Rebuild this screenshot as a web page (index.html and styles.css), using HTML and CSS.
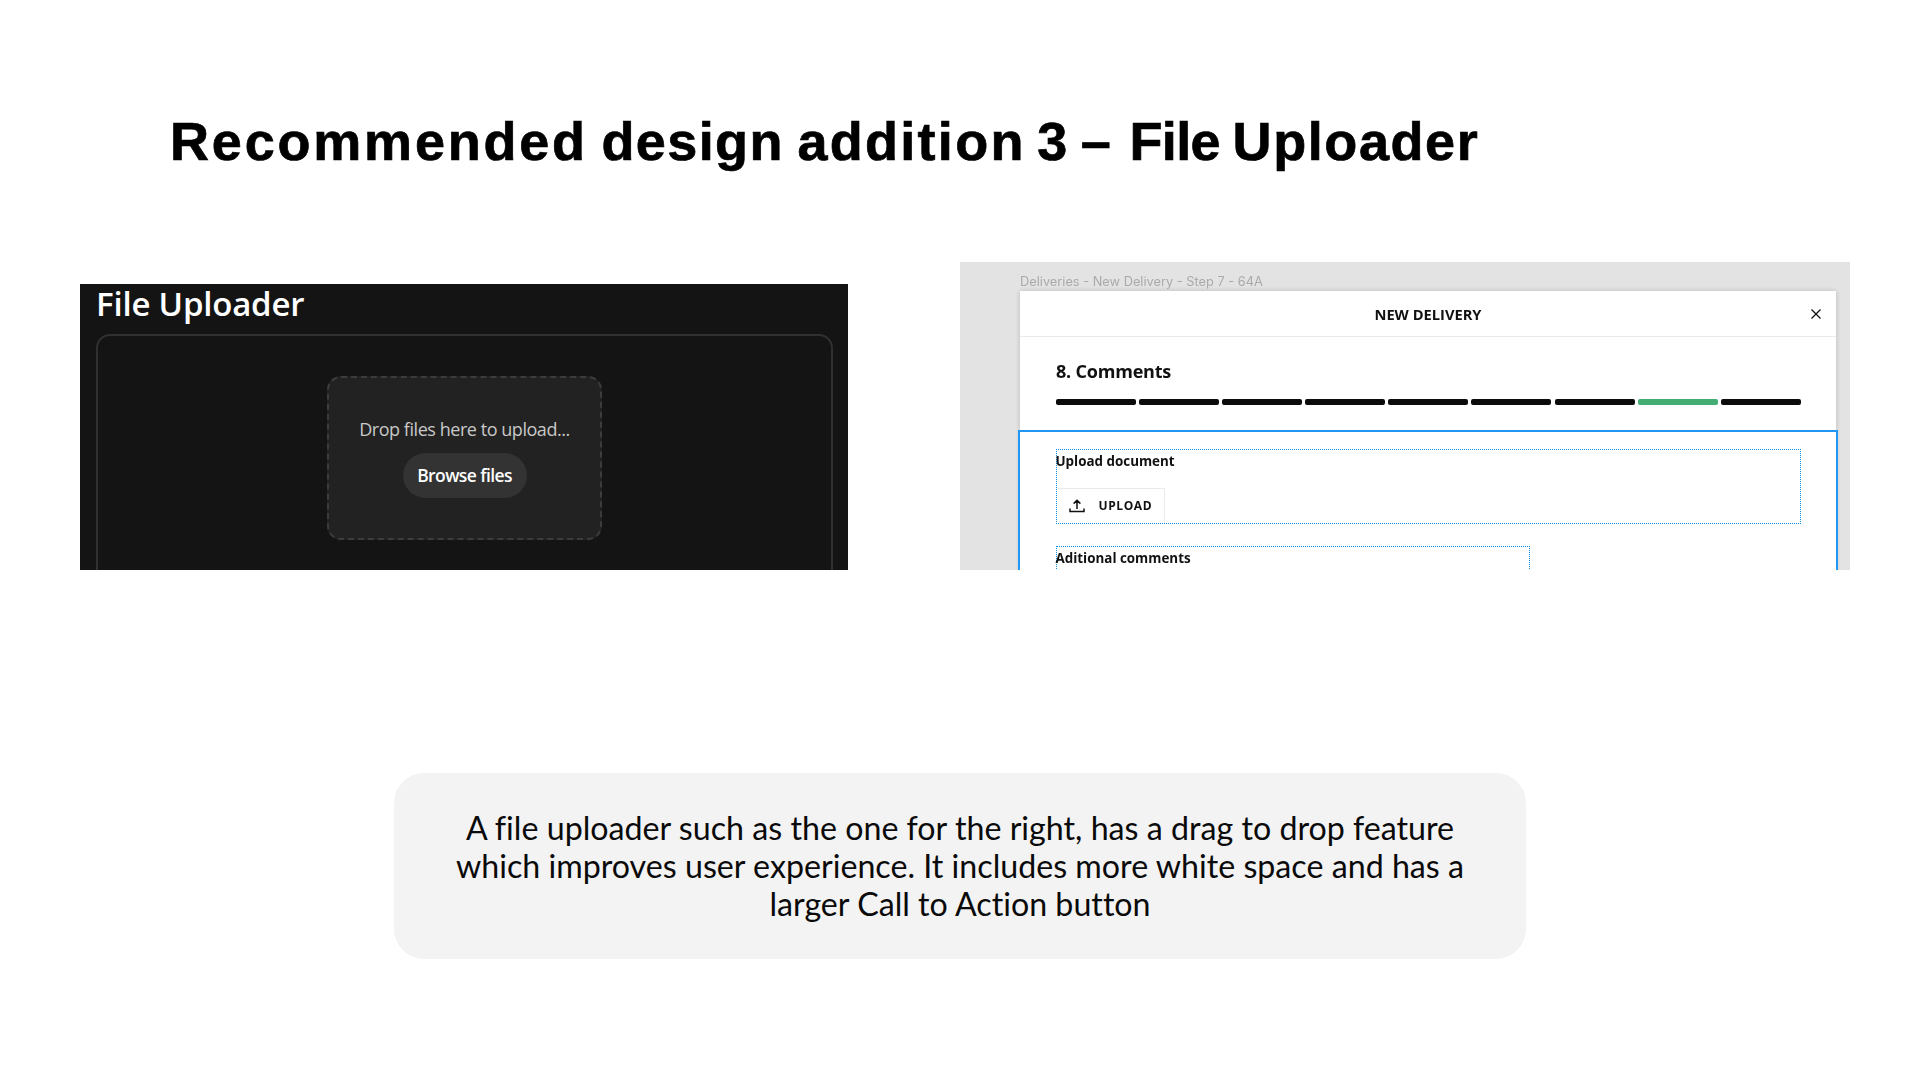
FILE: index.html
```html
<!DOCTYPE html>
<html lang="en">
<head>
<meta charset="utf-8">
<title>File Uploader</title>
<link rel="stylesheet" href="styles.css">
</head>
<body>
<main class="slide">
  <h1 class="title"><span class="t-recommended">Recommended</span> <span class="t-design">design</span> <span class="t-addition">addition</span> <span class="t-three">3</span> <span class="t-dash">–</span> <span class="t-file">File</span> <span class="t-uploader">Uploader</span></h1>
  <section class="shots">
    <div class="dark">
      <h2 class="dark-title">File Uploader</h2>
      <div class="dark-clip">
        <div class="dark-card">
          <div class="drop">
            <p class="drop-text">Drop files here to upload...</p>
            <span class="browse">Browse files</span>
          </div>
        </div>
      </div>
    </div>
    <div class="light">
      <p class="crumb">Deliveries - New Delivery - Step 7 - 64A</p>
      <div class="modal">
        <header class="modal-head">
          <span></span>
          <span class="modal-title">NEW DELIVERY</span>
          <svg class="close" viewBox="0 0 12 12" width="12" height="12"><path d="M1.5 1.5l9 9M10.5 1.5l-9 9" fill="none" stroke="#111" stroke-width="1.3"/></svg>
        </header>
        <div class="step">
          <h3 class="step-title">8. Comments</h3>
          <div class="bars">
            <i class="bar"></i><i class="bar"></i><i class="bar"></i><i class="bar"></i><i class="bar"></i><i class="bar"></i><i class="bar"></i><i class="bar green"></i><i class="bar"></i>
          </div>
        </div>
        <div class="frame">
          <div class="field">
            <div class="label">Upload document</div>
            <div class="upload">
              <svg viewBox="0 0 16 14" width="16" height="14"><path d="M8 10V1.5M4.6 4.6L8 1.2l3.4 3.4M1 9.5v3h14v-3" fill="none" stroke="#111" stroke-width="1.5"/></svg>
              <span class="upload-text">UPLOAD</span>
            </div>
          </div>
          <div class="field field-short">
            <div class="label">Aditional comments</div>
          </div>
        </div>
      </div>
    </div>
  </section>
  <section class="note">
    <p class="note-text">A file uploader such as the one for the right, has a drag to drop feature which improves user experience. It includes more white space and has a larger Call to Action button</p>
  </section>
</main>
</body>
</html>
```

FILE: styles.css
```css
* { box-sizing: border-box; }
html, body { margin: 0; padding: 0; background: #fff; }
.slide { width: 1920px; height: 1080px; overflow: hidden; display: flex; flex-direction: column; }
.title {
  margin: 110px 0 0 170px; height: 63px;
  font: bold 54px/62px "Liberation Sans", Arial, sans-serif; word-spacing: -1.5px; -webkit-text-stroke: .7px #000; color: #000; white-space: nowrap;
}
.t-recommended { letter-spacing: 2.8px; }
.t-design { letter-spacing: 1.4px; }
.t-addition { letter-spacing: 2.3px; }
.t-three { margin-left: -2px; }
.t-file { margin-left: 5px; letter-spacing: -.6px; }
.t-uploader { letter-spacing: 1.6px; margin-left: -1px; }
.shots { display: flex; align-items: flex-end; gap: 112px; margin: 89px 0 0 80px; height: 308px; }
.dark {
  width: 768px; height: 286px; background: #141414; padding: 0 0 0 16px;
  font-family: "Open Sans", sans-serif;
}
.dark-title { margin: 0; height: 50px; font: 600 33px/40px "Open Sans", sans-serif; letter-spacing: -.2px; color: #fff; white-space: nowrap; }
.dark-clip { height: 236px; overflow: hidden; }
.dark-card {
  width: 737px; height: 260px; border: 2px solid #303030; border-radius: 14px; padding-top: 40px;
}
.drop {
  width: 275px; height: 164px; margin: 0 auto; background: #222; border: 2px dashed #3c3c3c; border-radius: 14px;
  display: flex; flex-direction: column; align-items: center; padding-top: 39px;
}
.drop-text { margin: 0; font-size: 18px; line-height: 24px; letter-spacing: -.45px; color: #c8c8c8; white-space: nowrap; }
.browse {
  margin-top: 12px; width: 124px; height: 45px; border-radius: 23px; background: #333; color: #fff;
  font-size: 17.5px; font-weight: 600; line-height: 45px; text-align: center; letter-spacing: -.6px;
}
.light { width: 890px; height: 308px; background: #e3e3e3; overflow: hidden; padding-left: 60px; font-family: "Open Sans", sans-serif; filter: blur(.3px); }
.crumb { margin: 0; height: 29px; font: 12.8px/39px Inter, sans-serif; color: #aaa; white-space: nowrap; }
.modal { width: 816px; height: 300px; background: #fff; box-shadow: 0 0 5px rgba(0,0,0,.18); }
.modal-head {
  height: 46px; display: grid; grid-template-columns: 1fr auto 1fr; align-items: center;
  border-bottom: 1px solid #eaeaea; padding: 1px 14px 0;
}
.modal-title { font-size: 14.7px; font-weight: 700; color: #111; }
.close { justify-self: end; }
.step { height: 93px; padding: 22px 35px 0 36px; }
.step-title { margin: 0; font-size: 18px; line-height: 24px; font-weight: 700; letter-spacing: -.2px; color: #111; }
.bars { display: flex; gap: 3.1px; margin-top: 16px; }
.bar { width: 80px; height: 6px; border-radius: 2px; background: #0c0c0c; }
.green { background: #43ad74; }
.frame { margin: 0 -2px; height: 160px; background: #fff; border: 2.5px solid #2196f3; border-bottom: 0; padding: 16.5px 35.5px 0 35.5px; }
.field { width: 745px; height: 75px; border: 1px dotted #0a8fdc; }
.field-short { width: 474px; margin-top: 22px; }
.label { font-size: 13.4px; line-height: 20px; padding-top: 1px; height: 20px; font-weight: 700; color: #111; margin-left: -1px; }
.upload {
  margin-top: 18px; width: 108px; height: 35px; border: 1px solid #eaeaea; border-left: 0; border-bottom: 0;
  display: flex; align-items: center; gap: 14px; padding-left: 12px;
}
.upload-text { font-size: 12px; font-weight: 700; letter-spacing: .6px; color: #111; }
.note {
  margin: 203px 0 0 394px; width: 1132px; height: 186px; background: #f3f3f3; border-radius: 30px;
  display: flex; align-items: center; justify-content: center; padding: 0 50px;
}
.note-text { margin: 0; font: 32.2px/38px Lato, sans-serif; font-variant-ligatures: none; color: #0a0a0a; text-align: center; }
```
